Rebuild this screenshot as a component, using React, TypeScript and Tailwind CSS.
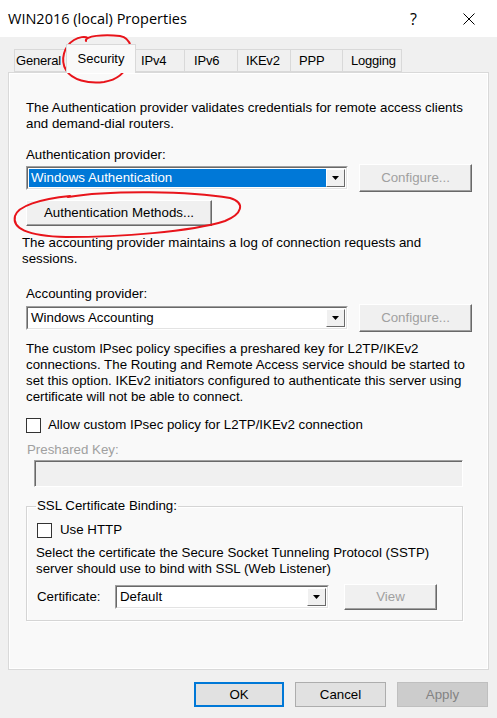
import React from "react";

const tabs = [
  { name: "General", w: 54, pl: 1 },
  { name: "Security", w: 70, pl: 0 },
  { name: "IPv4", w: 50, pl: 6 },
  { name: "IPv6", w: 53, pl: 9 },
  { name: "IKEv2", w: 53, pl: 8 },
  { name: "PPP", w: 52, pl: 8 },
  { name: "Logging", w: 60, pl: 8 },
];

function DropArrow() {
  return (
    <div className="flex h-full w-[19px] items-center justify-center border border-t-white border-l-white border-r-[#696969] border-b-[#696969] bg-[#f0f0f0]">
      <svg width="7" height="4" viewBox="0 0 7 4">
        <path d="M0 0 H7 L3.5 4 Z" fill="#000" />
      </svg>
    </div>
  );
}

function Combo({ value, selected, width }: { value: string; selected?: boolean; width: string }) {
  return (
    <div className={`${width} flex h-[24px] items-stretch border border-t-[#a0a0a0] border-l-[#a0a0a0] border-r-white border-b-white bg-white`}>
      <div className="flex flex-1 items-stretch border border-t-[#696969] border-l-[#696969] border-r-[#e3e3e3] border-b-[#e3e3e3] p-px">
        <div className={`flex flex-1 items-center pl-[2px] ${selected ? "bg-[#0078d7] text-white" : "text-black"}`}>
          {value}
        </div>
        <DropArrow />
      </div>
    </div>
  );
}

function ClassicButton({ label, disabled, width }: { label: string; disabled?: boolean; width: string }) {
  return (
    <div className={`${width} flex h-[28px] items-center justify-center border border-t-white border-l-white border-r-[#696969] border-b-[#696969] bg-[#f0f0f0] shadow-[inset_-1px_-1px_0_#a0a0a0]`}>
      <span className={disabled ? "text-[#a0a0a0]" : "text-black"}>{label}</span>
    </div>
  );
}

function CheckBox() {
  return <div className="h-[15px] w-[15px] shrink-0 border border-[#333] bg-white" />;
}

export default function App() {
  return (
    <div className="relative h-[718px] w-[497px] overflow-hidden bg-[#f0f0f0] font-['Liberation_Sans',Arial,sans-serif] text-[13.3px] leading-4 text-black">
      {/* Title bar */}
      <div className="flex h-[37px] items-center bg-white pl-[8px] font-['Open_Sans',sans-serif] text-[14.5px] text-black">
        <span className="flex-1">WIN2016 (local) Properties</span>
        <span className="mr-[46px] text-[16px]">?</span>
        <svg className="mr-[22px]" width="12" height="12" viewBox="0 0 12 12">
          <path d="M0.5 0.5 L11.5 11.5 M11.5 0.5 L0.5 11.5" stroke="#000" strokeWidth="1" />
        </svg>
      </div>

      {/* Tabs */}
      <div className="mt-[7px] flex h-[28px] items-end pl-[14px] text-[13px]">
        {tabs.map((t) =>
          t.name === "Security" ? (
            <div
              key={t.name}
              className="relative z-10 -mx-[2px] -mb-px flex h-[29px] w-[70px] items-start justify-center border border-b-0 border-[#d9d9d9] bg-[#f9f9f9] pt-[6px]"
            >
              {t.name}
            </div>
          ) : (
            <div
              key={t.name}
              style={{ width: t.w, paddingLeft: t.pl }}
              className="flex h-[23px] items-center whitespace-nowrap border border-r-0 border-[#d9d9d9] bg-[#f0f0f0] tracking-[-0.2px] last:border-r"
            >
              {t.name}
            </div>
          )
        )}
      </div>

      {/* Panel */}
      <div className="mx-[8px] h-[598px] border border-[#d9d9d9] bg-[#f9f9f9] pl-[17px] pt-[27px] shadow-[inset_1px_1px_0_#fff,inset_-1px_-1px_0_#fff]">
        <p>
          The Authentication provider validates credentials for remote access clients
          <br />
          and demand-dial routers.
        </p>

        <div className="mt-[15px]">Authentication provider:</div>
        <div className="mt-px flex h-[28px] items-center gap-[11px]">
          <Combo value="Windows Authentication" selected width="w-[322px]" />
          <ClassicButton label="Configure..." disabled width="w-[113px]" />
        </div>

        <div className="mt-[8px] flex h-[26px] w-[186px] items-center justify-center border border-t-white border-l-white border-r-[#696969] border-b-[#696969] bg-[#f0f0f0] shadow-[inset_-1px_-1px_0_#a0a0a0]">
          Authentication Methods...
        </div>

        <p className="-ml-[4px] mt-[9px]">
          The accounting provider maintains a log of connection requests and
          <br />
          sessions.
        </p>

        <div className="mt-[19px]">Accounting provider:</div>
        <div className="mt-[2px] flex h-[28px] items-center gap-[11px]">
          <Combo value="Windows Accounting" width="w-[322px]" />
          <ClassicButton label="Configure..." disabled width="w-[113px]" />
        </div>

        <p className="mt-[9px]">
          The custom IPsec policy specifies a preshared key for L2TP/IKEv2
          <br />
          connections. The Routing and Remote Access service should be started to
          <br />
          set this option. IKEv2 initiators configured to authenticate this server using
          <br />
          certificate will not be able to connect.
        </p>

        <div className="mt-[12px] flex h-4 items-center gap-[7px]">
          <CheckBox />
          <span>Allow custom IPsec policy for L2TP/IKEv2 connection</span>
        </div>

        <div className="ml-px mt-[9px] text-[#a0a0a0]">Preshared Key:</div>
        <div className="ml-[8px] mt-[2px] h-[27px] w-[429px] border border-t-[#a0a0a0] border-l-[#a0a0a0] border-r-white border-b-white bg-[#f0f0f0] shadow-[inset_1px_1px_0_#696969]" />

        <fieldset className="mt-[11px] w-[437px] border border-[#d5d5d5] pb-[10px] pl-[10px] shadow-[inset_1px_1px_0_#fff,1px_1px_0_#fff]">
          <legend className="-ml-px px-px">SSL Certificate Binding:</legend>
          <div className="mt-[8px] flex h-4 items-center gap-[8px]">
            <CheckBox />
            <span>Use HTTP</span>
          </div>
          <p className="-ml-px mt-[7px]">
            Select the certificate the Secure Socket Tunneling Protocol (SSTP)
            <br />
            server should use to bind with SSL (Web Listener)
          </p>
          <div className="mt-[7px] flex h-[26px] items-center">
            <span className="w-[78px]">Certificate:</span>
            <Combo value="Default" width="w-[214px]" />
            <div className="ml-[15px] flex h-[26px] w-[93px] items-center justify-center border border-t-white border-l-white border-r-[#696969] border-b-[#696969] bg-[#f0f0f0] text-[#a0a0a0] shadow-[inset_-1px_-1px_0_#a0a0a0]">
              View
            </div>
          </div>
        </fieldset>
      </div>

      {/* Bottom buttons */}
      <div className="mt-[12px] flex justify-end gap-[11px] pr-[9px]">
        <div className="flex h-[25px] w-[90px] items-center justify-center border-2 border-[#0078d7] bg-[#e1e1e1]">OK</div>
        <div className="flex h-[25px] w-[91px] items-center justify-center border border-[#adadad] bg-[#e1e1e1]">Cancel</div>
        <div className="flex h-[25px] w-[91px] items-center justify-center border border-[#bfbfbf] bg-[#cccccc] text-[#838383]">Apply</div>
      </div>

      {/* Red annotations */}
      <svg className="pointer-events-none absolute left-0 top-0" width="497" height="718" viewBox="0 0 497 718" fill="none">
        <path
          d="M86 41 C 84 36, 104 34, 120 36 C 132 38, 133 52, 129 62 C 125 74, 116 80, 104 82 C 88 84, 72 80, 66 70 C 60 60, 64 46, 74 40 C 79 37, 85 36, 88 38"
          stroke="#e8141b"
          strokeWidth="2"
          strokeLinecap="round"
        />
        <path
          d="M68 197 C 110 190, 190 191, 230 198 C 246 203, 242 214, 225 221 C 190 232, 120 237, 66 237 C 26 236, 12 228, 15 216 C 18 206, 40 199, 70 196"
          stroke="#e8141b"
          strokeWidth="2"
          strokeLinecap="round"
        />
      </svg>
    </div>
  );
}
